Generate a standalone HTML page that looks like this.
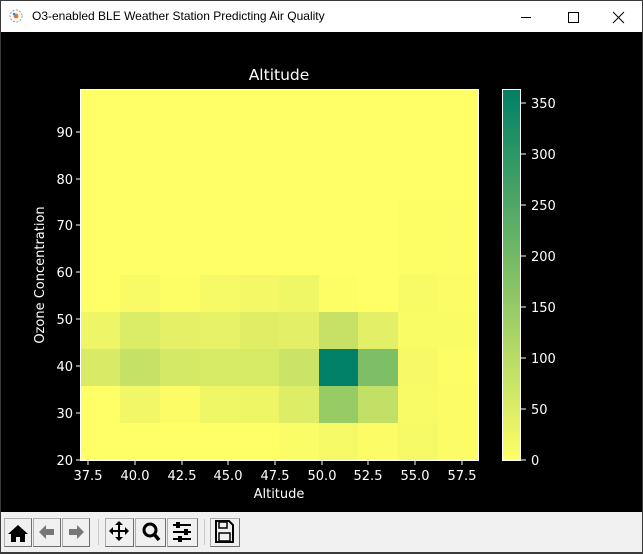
<!DOCTYPE html>
<html><head><style>
*{margin:0;padding:0;box-sizing:border-box}
body{width:643px;height:554px;overflow:hidden;background:#f0f0f0;font-family:"DejaVu Sans","Liberation Sans",sans-serif;position:relative}
.win{position:absolute;left:0;top:0;width:643px;height:554px;border:1px solid #3a3a3a}
.tb{position:absolute;left:1px;top:1px;width:641px;height:31px;background:#fff}
.tt{position:absolute;left:31px;top:8px;font:12px "Liberation Sans",sans-serif;color:#000}
.fig{position:absolute;left:1px;top:32px;width:641px;height:480px;background:#000}
.btn{position:absolute;top:518px;height:29px;background:#f0f0f0;border:1px solid #adadad;border-right-color:#707070;border-bottom-color:#707070}
.sep{position:absolute;top:519px;width:1px;height:26px;background:#c8c8c8}
</style></head><body>
<div class="win"></div>
<div class="tb">
<svg style="position:absolute;left:7px;top:7px" width="16" height="16"><circle cx="8" cy="8" r="6" fill="none" stroke="#999" stroke-dasharray="2 1.5"/><circle cx="8" cy="8" r="2.5" fill="#e87b2a"/><circle cx="6" cy="6" r="1.2" fill="#3a7bd5"/></svg>
<div class="tt">O3-enabled BLE Weather Station Predicting Air Quality</div>
<svg style="position:absolute;left:520px;top:8px" width="110" height="16"><line x1="0" y1="8.5" x2="10" y2="8.5" stroke="#000"/><rect x="47.5" y="3.5" width="10" height="10" fill="none" stroke="#000"/><path d="M92 3L103 14M103 3L92 14" stroke="#000"/></svg>
</div>
<div class="fig"></div>
<svg style="position:absolute;left:0;top:0" width="643" height="512" font-family="DejaVu Sans,sans-serif" font-size="13" fill="#fff">
<text x="279" y="80" text-anchor="middle" font-size="15.5">Altitude</text>
<g id="cells"></g>
<rect x="81" y="90" width="397" height="370" fill="#ffff66"/>
<g shape-rendering="crispEdges">
<!-- row 275-312 -->
<rect x="120" y="275" width="40" height="37" fill="#f8fa66"/><rect x="160" y="275" width="40" height="37" fill="#fdfe66"/><rect x="200" y="275" width="40" height="37" fill="#f6f966"/><rect x="240" y="275" width="39" height="37" fill="#f5f866"/><rect x="279" y="275" width="40" height="37" fill="#eff766"/><rect x="319" y="275" width="39" height="37" fill="#fdfe66"/><rect x="398" y="275" width="40" height="37" fill="#f8fb66"/><rect x="438" y="275" width="40" height="37" fill="#fcfd66"/>
<rect x="398" y="201" width="80" height="74" fill="#fdfe66"/>
<!-- row 312-349 -->
<rect x="81" y="312" width="39" height="37" fill="#eef566"/><rect x="120" y="312" width="40" height="37" fill="#dbec66"/><rect x="160" y="312" width="40" height="37" fill="#e5f066"/><rect x="200" y="312" width="40" height="37" fill="#e6f166"/><rect x="240" y="312" width="39" height="37" fill="#e0ee66"/><rect x="279" y="312" width="40" height="37" fill="#e3ef66"/><rect x="319" y="312" width="39" height="37" fill="#c6e166"/><rect x="358" y="312" width="40" height="37" fill="#e3ef66"/><rect x="398" y="312" width="80" height="37" fill="#fafc66"/>
<!-- row 349-386 -->
<rect x="81" y="349" width="39" height="37" fill="#d9eb66"/><rect x="120" y="349" width="40" height="37" fill="#c5e166"/><rect x="160" y="349" width="40" height="37" fill="#d4e966"/><rect x="200" y="349" width="79" height="37" fill="#d6ea66"/><rect x="279" y="349" width="40" height="37" fill="#cbe366"/><rect x="319" y="349" width="39" height="37" fill="#008066"/><rect x="358" y="349" width="40" height="37" fill="#7dbe66"/><rect x="398" y="349" width="40" height="37" fill="#f7fa66"/><rect x="438" y="349" width="40" height="37" fill="#fdfe66"/>
<!-- row 386-423 -->
<rect x="120" y="386" width="40" height="37" fill="#f1f766"/><rect x="160" y="386" width="40" height="37" fill="#fcfd66"/><rect x="200" y="386" width="40" height="37" fill="#eff766"/><rect x="240" y="386" width="39" height="37" fill="#eef666"/><rect x="279" y="386" width="40" height="37" fill="#deed66"/><rect x="319" y="386" width="39" height="37" fill="#97cb66"/><rect x="358" y="386" width="40" height="37" fill="#c2e066"/><rect x="398" y="386" width="40" height="37" fill="#f8fb66"/><rect x="438" y="386" width="40" height="37" fill="#fcfd66"/>
<!-- row 423-460 -->
<rect x="279" y="423" width="40" height="37" fill="#fbfd66"/><rect x="319" y="423" width="39" height="37" fill="#f6f966"/><rect x="358" y="423" width="40" height="37" fill="#fcfd66"/><rect x="398" y="423" width="40" height="37" fill="#f6f966"/><rect x="438" y="423" width="40" height="37" fill="#fcfd66"/>
</g>
<rect x="80.5" y="89.5" width="398" height="371" fill="none" stroke="#fff"/>
<g stroke="#fff">
<line x1="76" y1="460" x2="81" y2="460"/><line x1="76" y1="413" x2="81" y2="413"/><line x1="76" y1="366" x2="81" y2="366"/><line x1="76" y1="319" x2="81" y2="319"/><line x1="76" y1="272" x2="81" y2="272"/><line x1="76" y1="225" x2="81" y2="225"/><line x1="76" y1="179" x2="81" y2="179"/><line x1="76" y1="132" x2="81" y2="132"/>
<line x1="88" y1="460" x2="88" y2="465"/><line x1="135" y1="460" x2="135" y2="465"/><line x1="182" y1="460" x2="182" y2="465"/><line x1="228" y1="460" x2="228" y2="465"/><line x1="275" y1="460" x2="275" y2="465"/><line x1="322" y1="460" x2="322" y2="465"/><line x1="368" y1="460" x2="368" y2="465"/><line x1="415" y1="460" x2="415" y2="465"/><line x1="462" y1="460" x2="462" y2="465"/>
</g>
<g text-anchor="end">
<text x="73" y="465">20</text><text x="73" y="418">30</text><text x="73" y="371">40</text><text x="73" y="324">50</text><text x="73" y="277">60</text><text x="73" y="230">70</text><text x="73" y="184">80</text><text x="73" y="137">90</text>
</g>
<g text-anchor="middle">
<text x="88" y="480">37.5</text><text x="135" y="480">40.0</text><text x="182" y="480">42.5</text><text x="228" y="480">45.0</text><text x="275" y="480">47.5</text><text x="322" y="480">50.0</text><text x="368" y="480">52.5</text><text x="415" y="480">55.0</text><text x="462" y="480">57.5</text>
<text x="279" y="498">Altitude</text>
<text transform="translate(44 275) rotate(-90)">Ozone Concentration</text>
</g>
<defs><linearGradient id="cb" x1="0" y1="1" x2="0" y2="0"><stop offset="0" stop-color="#ffff66"/><stop offset="1" stop-color="#008066"/></linearGradient></defs>
<rect x="502.5" y="89.5" width="18" height="371" fill="url(#cb)" stroke="#fff"/>
<g stroke="#fff">
<line x1="521" y1="460" x2="526" y2="460"/><line x1="521" y1="409" x2="526" y2="409"/><line x1="521" y1="358" x2="526" y2="358"/><line x1="521" y1="307" x2="526" y2="307"/><line x1="521" y1="256" x2="526" y2="256"/><line x1="521" y1="205" x2="526" y2="205"/><line x1="521" y1="154" x2="526" y2="154"/><line x1="521" y1="103" x2="526" y2="103"/>
</g>
<text x="531" y="465">0</text><text x="531" y="414">50</text><text x="531" y="363">100</text><text x="531" y="312">150</text><text x="531" y="261">200</text><text x="531" y="210">250</text><text x="531" y="159">300</text><text x="531" y="108">350</text>
</svg>
<div class="btn" style="left:4px;width:28px"></div>
<div class="btn" style="left:33px;width:28px"></div>
<div class="btn" style="left:62px;width:28px"></div>
<div class="sep" style="left:98px"></div>
<div class="btn" style="left:105px;width:29px"></div>
<div class="btn" style="left:135px;width:31px"></div>
<div class="btn" style="left:167px;width:31px"></div>
<div class="sep" style="left:204px"></div>
<div class="btn" style="left:210px;width:30px"></div>
<svg style="position:absolute;left:0;top:512px" width="250" height="42">
<path d="M18 13L8 22h3v8h5v-5h4v5h5v-8h3z" fill="#000"/>
<path d="M39 20l7-7v4h8v6h-8v4z" fill="#777"/>
<path d="M84 20l-7-7v4h-8v6h8v4z" fill="#777"/>
<path d="M119 9l-4 4h3v5h-5v-3l-4 4 4 4v-3h5v5h-3l4 4 4-4h-3v-5h5v3l4-4-4-4v3h-5v-5h3z" fill="#000"/>
<circle cx="150" cy="18" r="6" fill="none" stroke="#000" stroke-width="3"/><path d="M154 22l5 6" stroke="#000" stroke-width="3.5"/>
<g stroke="#000" stroke-width="2"><path d="M173 13h18M173 20h18M173 27h18"/></g><rect x="176" y="10" width="4" height="6" fill="#000"/><rect x="184" y="17" width="4" height="6" fill="#000"/><rect x="178" y="24" width="4" height="6" fill="#000"/>
<path d="M216 9h13l4 4v17h-17z" fill="none" stroke="#000" stroke-width="2"/><rect x="219" y="10" width="8" height="6" fill="none" stroke="#000" stroke-width="1.5"/><rect x="219" y="21" width="11" height="8" fill="none" stroke="#000" stroke-width="1.5"/>
</svg>
<div style="position:absolute;left:0;top:552px;width:643px;height:2px;background:#3a3a3a"></div>
</body></html>
